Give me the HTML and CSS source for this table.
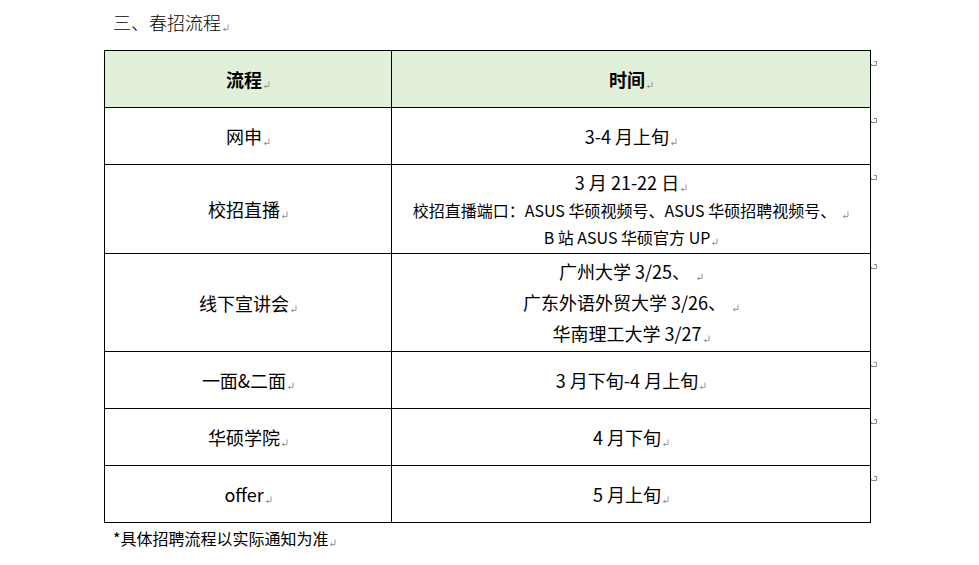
FILE: index.html
```html
<!DOCTYPE html>
<html lang="zh-CN">
<head>
<meta charset="utf-8">
<link rel="stylesheet" href="styles.css">
</head>
<body>
<div class="page">
  <h2 class="title">三、春招流程<span class="pm"></span></h2>
  <table class="flow">
    <tr class="r-head">
      <th class="c1">流程<span class="pm"></span></th>
      <th class="c2">时间<span class="pm"></span></th>
      <td class="end"><span class="rm"></span></td>
    </tr>
    <tr class="r-57">
      <td class="c1">网申<span class="pm"></span></td>
      <td class="c2">3-4 月上旬<span class="pm"></span></td>
      <td class="end"><span class="rm"></span></td>
    </tr>
    <tr class="r-live">
      <td class="c1">校招直播<span class="pm"></span></td>
      <td class="c2">
        <div class="line">3 月 21-22 日<span class="pm"></span></div>
        <div class="small">校招直播端口：ASUS 华硕视频号、ASUS 华硕招聘视频号、<span class="pm sp"></span></div>
        <div class="small">B 站 ASUS 华硕官方 UP<span class="pm"></span></div>
      </td>
      <td class="end"><span class="rm"></span></td>
    </tr>
    <tr class="r-talk">
      <td class="c1">线下宣讲会<span class="pm"></span></td>
      <td class="c2">
        <div class="line3">广州大学 3/25、<span class="pm sp"></span></div>
        <div class="line3">广东外语外贸大学 3/26、<span class="pm sp"></span></div>
        <div class="line3">华南理工大学 3/27<span class="pm"></span></div>
      </td>
      <td class="end"><span class="rm"></span></td>
    </tr>
    <tr class="r-57">
      <td class="c1">一面&amp;二面<span class="pm"></span></td>
      <td class="c2">3 月下旬-4 月上旬<span class="pm"></span></td>
      <td class="end"><span class="rm"></span></td>
    </tr>
    <tr class="r-57">
      <td class="c1">华硕学院<span class="pm"></span></td>
      <td class="c2">4 月下旬<span class="pm"></span></td>
      <td class="end"><span class="rm"></span></td>
    </tr>
    <tr class="r-57">
      <td class="c1">offer<span class="pm"></span></td>
      <td class="c2">5 月上旬<span class="pm"></span></td>
      <td class="end"><span class="rm"></span></td>
    </tr>
  </table>
  <p class="note">*具体招聘流程以实际通知为准<span class="pm"></span></p>
</div>
</body>
</html>
```

FILE: styles.css
```css
html, body {
  margin: 0;
  padding: 0;
  background: #fff;
}
body {
  font-family: "Noto Sans CJK SC", "Noto Sans", sans-serif;
  color: #000;
}
.page {
  padding-top: 9px;
}
.title {
  margin: 0 0 0 113px;
  font-size: 18px;
  font-weight: 300;
  line-height: 26px;
  height: 26px;
}
.flow {
  margin: 15px 0 0 104px;
  border-collapse: collapse;
  font-size: 18px;
}
.flow th, .flow td.c1, .flow td.c2 {
  border: 1px solid #000;
  text-align: center;
  vertical-align: middle;
  padding: 0;
  line-height: 26px;
}
.flow th {
  background: #e2efd9;
  font-weight: bold;
}
.c1 { width: 286px; }
.c2 { width: 478px; }
.flow td.end {
  border: none;
  width: 14px;
  padding: 0;
  vertical-align: top;
}
.r-head { height: 57px; }
.r-57 { height: 57px; }
.r-live { height: 89px; }
.r-talk { height: 98px; }
.line { line-height: 30px; }
.small { font-size: 16px; line-height: 27px; }
.line3 { line-height: 31px; }
.pm {
  display: inline-block;
  width: 7px;
  height: 8px;
  margin-left: 1px;
  vertical-align: -2px;
  background: no-repeat center / 7px 8px url("data:image/svg+xml;utf8,<svg xmlns='http://www.w3.org/2000/svg' width='7' height='8' viewBox='0 0 7 8'><path d='M6 0.5V5.5H1.5M3.2 3.8L1.3 5.5L3.2 7.2' fill='none' stroke='%23999' stroke-width='1'/></svg>");
}
.pm.sp { margin-left: 6px; }
.rm {
  display: block;
  width: 7px;
  height: 7px;
  margin-top: 10px;
  background: no-repeat url("data:image/svg+xml;utf8,<svg xmlns='http://www.w3.org/2000/svg' width='7' height='7' viewBox='0 0 7 7'><path d='M3 0.5H5.5V4.5H0.5V3' fill='none' stroke='%23888' stroke-width='1'/></svg>");
}
.note {
  margin: 5px 0 0 113px;
  font-size: 16px;
  line-height: 20px;
}
```
